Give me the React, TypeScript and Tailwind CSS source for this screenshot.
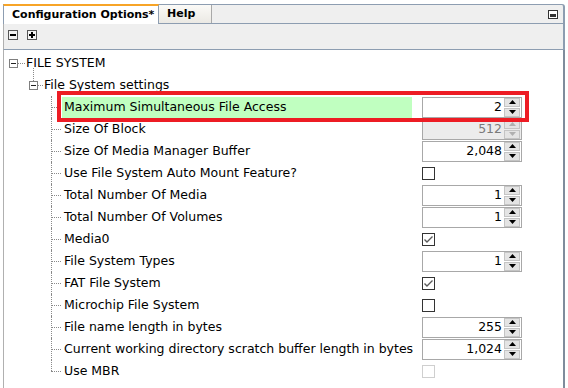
import React from "react";

type Row =
  | { label: string; kind: "spin"; value: string; disabled?: boolean; hl?: boolean }
  | { label: string; kind: "check"; checked: boolean; disabled?: boolean };

const rows: Row[] = [
  { label: "Maximum Simultaneous File Access", kind: "spin", value: "2", hl: true },
  { label: "Size Of Block", kind: "spin", value: "512", disabled: true },
  { label: "Size Of Media Manager Buffer", kind: "spin", value: "2,048" },
  { label: "Use File System Auto Mount Feature?", kind: "check", checked: false },
  { label: "Total Number Of Media", kind: "spin", value: "1" },
  { label: "Total Number Of Volumes", kind: "spin", value: "1" },
  { label: "Media0", kind: "check", checked: true },
  { label: "File System Types", kind: "spin", value: "1" },
  { label: "FAT File System", kind: "check", checked: true },
  { label: "Microchip File System", kind: "check", checked: false },
  { label: "File name length in bytes", kind: "spin", value: "255" },
  { label: "Current working directory scratch buffer length in bytes", kind: "spin", value: "1,024" },
  { label: "Use MBR", kind: "check", checked: false, disabled: true },
];

function Expander() {
  return (
    <div className="w-[9px] h-[9px] border border-[#7f7f7f] bg-white flex items-center justify-center shrink-0">
      <div className="w-[5px] h-px bg-[#222]" />
    </div>
  );
}

function Spinner({ value, disabled }: { value: string; disabled?: boolean }) {
  const arrow = disabled ? "#b0b0b0" : "#000";
  return (
    <div
      className={`w-[100px] h-[21px] border border-[#a8a8a8] flex items-center ${
        disabled ? "bg-[#ececec]" : "bg-white"
      }`}
    >
      <div
        className={`flex-1 text-right pr-[2px] text-[12.5px] leading-none ${
          disabled ? "text-[#7a7a7a]" : "text-black"
        }`}
      >
        {value}
      </div>
      <div className="w-[16px] h-[19px] flex flex-col gap-px mr-px">
        <div className="flex-1 bg-[#e4e4e4] border border-[#c4c4c4] flex items-center justify-center">
          <svg width="7" height="4" viewBox="0 0 7 4">
            <path d="M0 4 L3.5 0 L7 4 Z" fill={arrow} />
          </svg>
        </div>
        <div className="flex-1 bg-[#e4e4e4] border border-[#c4c4c4] flex items-center justify-center">
          <svg width="7" height="4" viewBox="0 0 7 4">
            <path d="M0 0 L3.5 4 L7 0 Z" fill={arrow} />
          </svg>
        </div>
      </div>
    </div>
  );
}

function Check({ checked, disabled }: { checked: boolean; disabled?: boolean }) {
  return (
    <div
      className={`w-[13px] h-[13px] border bg-white flex items-center justify-center ${
        disabled ? "border-[#cfcfcf]" : "border-[#333]"
      }`}
    >
      {checked && (
        <svg width="11" height="11" viewBox="0 0 11 11">
          <path d="M1.5 5.5 L4 8 L9.5 2.5" stroke="#5a5a5a" strokeWidth="1.4" fill="none" />
        </svg>
      )}
    </div>
  );
}

export default function App() {
  return (
    <div
      className="w-[568px] h-[388px] bg-white overflow-hidden relative pt-[4px] text-black"
      style={{ fontFamily: "Tahoma, 'DejaVu Sans', sans-serif" }}
    >
      <div className="ml-[3px] w-[562px] h-[384px] flex flex-col">
        {/* tab strip */}
        <div className="flex h-[20px] bg-[#efefef] border-t border-r-2 border-[#8d9db1] rounded-tr-[3px] border-b">
          <div className="w-[156px] h-[20px] -mt-px bg-white border-t-2 border-t-[#f7a427] border-l border-l-[#8d9db1] border-r border-r-[#8d9db1] flex items-center pl-[8px] text-[11px] font-bold z-10">
            Configuration Options*
          </div>
          <div className="w-[53px] h-[18px] bg-gradient-to-b from-[#fbfaf7] to-[#ebe9e4] border-r border-[#a9a9a9] flex items-center pl-[8px] text-[11px] font-bold">
            Help
          </div>
          <div className="flex-1" />
          <div className="pr-[5px] flex items-center">
            <div className="w-[10px] h-[9px] border border-[#333] bg-white flex items-end justify-center pb-[1px]">
              <div className="w-[6px] h-[3px] bg-[#333]" />
            </div>
          </div>
        </div>
        {/* toolbar */}
        <div className="h-[26px] bg-[#efefef] border-b border-r-2 border-[#8d9db1] border-l border-l-[#b0b0b0] flex items-start gap-[9px] pl-[4px] pt-[6px]">
          <div className="w-[10px] h-[10px] border border-[#555] bg-[#f4f4f4] flex items-center justify-center">
            <div className="w-[6px] h-[2px] bg-black" />
          </div>
          <div className="w-[10px] h-[10px] border border-[#555] bg-[#f4f4f4] flex items-center justify-center relative">
            <div className="w-[6px] h-[2px] bg-black absolute" />
            <div className="w-[2px] h-[6px] bg-black absolute" />
          </div>
        </div>
        {/* content */}
        <div className="flex-1 bg-white border-l border-l-[#b0b0b0] border-r-2 border-r-[#7f8c9c] pt-[2px] text-[12.5px] relative">
          {/* root */}
          <div className="h-[22px] flex items-center pl-[5px]">
            <Expander />
            <div className="w-[7px] border-t border-dotted border-[#8a8a8a]" />
            <span className="pl-px">FILE SYSTEM</span>
          </div>
          <div className="h-[22px] flex items-center pl-[25px] relative">
            <div className="absolute left-[29px] top-[-6px] h-[13px] border-l border-dotted border-[#8a8a8a]" />
            <Expander />
            <div className="w-[5px] border-t border-dotted border-[#8a8a8a]" />
            <span className="pl-px">File System settings</span>
          </div>
          {rows.map((r, i) => {
            const last = i === rows.length - 1;
            return (
              <div key={i} className="h-[22px] flex items-center">
                <div className="w-[47px] shrink-0" />
                <div className="w-[11px] h-full relative shrink-0">
                  <div
                    className={`absolute left-0 top-0 border-l border-dotted border-[#8a8a8a] ${
                      last ? "h-[11px]" : "h-full"
                    }`}
                  />
                  <div className="absolute left-0 top-[11px] w-[10px] border-t border-dotted border-[#8a8a8a]" />
                </div>
                <div
                  className={`w-[350px] h-[21px] flex items-center pl-[2px] shrink-0 whitespace-nowrap ${
                    r.kind === "spin" && r.hl ? "bg-[#c0ffc0]" : ""
                  }`}
                >
                  {r.label}
                </div>
                <div className="w-[10px] shrink-0" />
                {r.kind === "spin" ? (
                  <Spinner value={r.value} disabled={r.disabled} />
                ) : (
                  <Check checked={r.checked} disabled={r.disabled} />
                )}
              </div>
            );
          })}
        </div>
      </div>
      {/* annotation */}
      <div className="absolute left-[57px] top-[91px] w-[472px] h-[31px] border-4 border-[#ed1c24] pointer-events-none" />
    </div>
  );
}
